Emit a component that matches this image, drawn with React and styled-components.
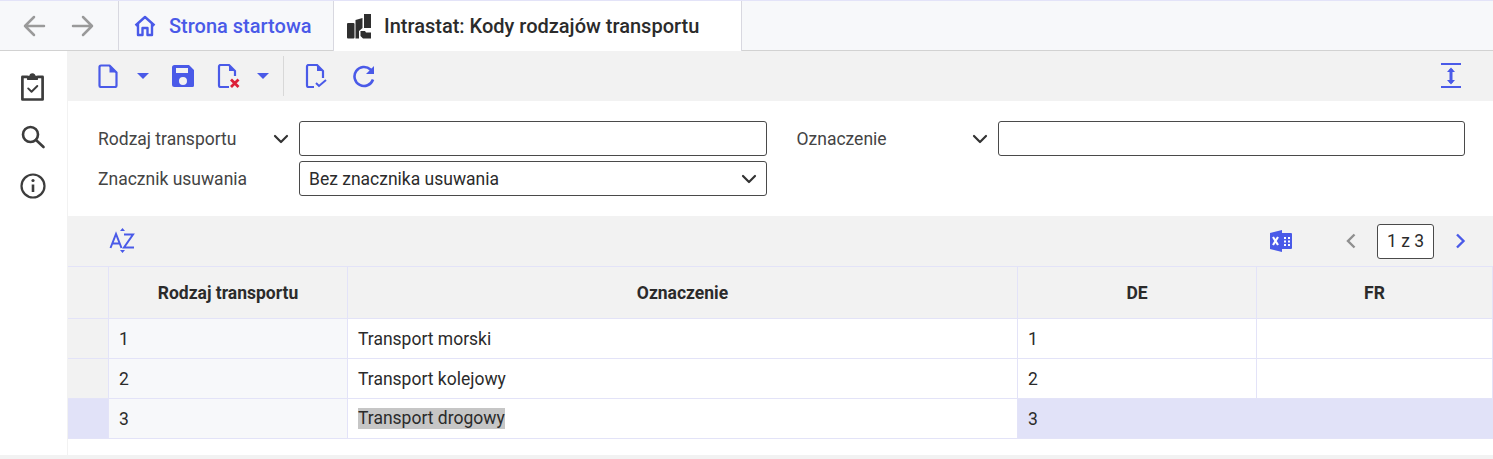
import React from "react";
import styled, { createGlobalStyle } from "styled-components";

const BLUE = "#4a5ae8";
const DARK = "#3c3c3c";
const LINE = "#e3e3f8";

const GlobalStyle = createGlobalStyle`
  html, body { margin: 0; padding: 0; background: #fff; }
  body { font-family: Roboto, "Liberation Sans", sans-serif; font-size: 17.5px; color: #2b2b2b; }
`;

const Page = styled.div`
  width: 1493px;
  height: 459px;
  overflow: hidden;
  display: flex;
  flex-direction: column;
  background: #fff;
`;

const TabBar = styled.div`
  flex: none;
  display: flex;
  background: #f7f8fa;
  border-top: 1px solid ${LINE};
  border-bottom: 1px solid #d2d2d2;
  height: 49px;
`;

const Nav = styled.div`
  width: 118px;
  flex: none;
  display: flex;
  align-items: center;
  padding-left: 22px;
  gap: 25px;
  box-sizing: border-box;
`;

const Tab = styled.div`
  display: flex;
  align-items: center;
  box-sizing: border-box;
  width: ${(p) => p.$width}px;
  padding-left: ${(p) => p.$pad}px;
  gap: ${(p) => p.$gap}px;
  border-left: 1px solid #d8d8e0;
  font-size: 20px;
  font-weight: 500;
  ${(p) =>
    p.$active
      ? `background:#fff; color:#2b2b2b; height:50px; border-right:1px solid #d8d8e0;`
      : `color:${BLUE};`}
`;

const Body = styled.div`
  flex: 1;
  display: flex;
  min-height: 0;
`;

const Sidebar = styled.div`
  width: 68px;
  flex: none;
  display: flex;
  flex-direction: column;
  align-items: center;
  padding: 21px 2px 0 0;
  gap: 23px;
  box-sizing: border-box;
  border-right: 1px solid #f2f2f2;
`;

const Main = styled.div`
  flex: 1;
  min-width: 0;
  display: flex;
  flex-direction: column;
`;

const Toolbar = styled.div`
  height: 50px;
  flex: none;
  display: flex;
  align-items: center;
  background: #f2f2f2;
  padding-left: 28px;
  padding-right: 31px;
`;

const ToolSlot = styled.span`
  display: inline-flex;
  margin-left: ${(p) => p.$ml || 0}px;
`;

const Separator = styled.span`
  width: 1px;
  height: 40px;
  background: #d8d8d8;
  margin-left: ${(p) => p.$ml}px;
`;

const Spacer = styled.span`
  flex: 1;
`;

const Filters = styled.div`
  height: 115px;
  flex: none;
  box-sizing: border-box;
  padding: 20px 28px 0 30px;
  display: grid;
  grid-template-columns: 1fr 1fr;
  column-gap: 30px;
  row-gap: 5px;
  grid-auto-rows: 35px;
`;

const Field = styled.div`
  display: grid;
  grid-template-columns: 201px 1fr;
  align-items: center;
`;

const Label = styled.div`
  display: flex;
  align-items: center;
  justify-content: space-between;
  padding-right: 10px;
  color: #444;
`;

const Input = styled.div`
  height: 35px;
  box-sizing: border-box;
  border: 1px solid #4a4a4a;
  border-radius: 3px;
  background: #fff;
  display: flex;
  align-items: center;
  justify-content: space-between;
  padding: 0 9px;
`;

const GridBar = styled.div`
  height: 50px;
  flex: none;
  display: flex;
  align-items: center;
  background: #f2f2f2;
  padding-left: 41px;
  padding-right: 27px;
`;

const Pager = styled.div`
  width: 57px;
  height: 35px;
  box-sizing: border-box;
  border: 1px solid #4a4a4a;
  border-radius: 3px;
  background: #fff;
  display: flex;
  align-items: center;
  justify-content: center;
  margin-left: 20px;
  margin-right: 20px;
`;

const Table = styled.div`
  display: grid;
  grid-template-columns: 41px 239px 670px 239px 1fr;
  grid-template-rows: 52px 40px 40px 40px;
  border-top: 1px solid ${LINE};
`;

const Cell = styled.div`
  display: flex;
  align-items: center;
  box-sizing: border-box;
  padding: 0 10px;
  border-bottom: 1px solid ${LINE};
  border-right: 1px solid ${LINE};
  background: #fff;
  &:last-child { border-right: none; }
`;

const HeadCell = styled(Cell)`
  justify-content: center;
  font-weight: 700;
  background: #f2f2f2;
  padding: 0;
`;

const Handle = styled(Cell)`
  background: ${(p) => (p.$selected ? "#e1e2f8" : "#f2f2f2")};
`;

const KeyCell = styled(Cell)`
  background: #f7f8fa;
`;

const ValueCell = styled(Cell)`
  ${(p) => p.$selected && `background:#e1e2f8; border-right-color:#e1e2f8;`}
`;

const Selected = styled.span`
  background: #c6c6c6;
  line-height: 21px;
`;

const Footer = styled.div`
  height: 4px;
  flex: none;
  background: #f2f2f2;
`;

const ArrowLeft = ({ color }) => (
  <svg width="24" height="24" viewBox="0 0 24 24" fill="none" stroke={color} strokeWidth="2.500" strokeLinecap="round" strokeLinejoin="round">
    <path d="M22 12H3M12 3l-9 9 9 9" />
  </svg>
);

const ArrowRight = ({ color }) => (
  <svg width="24" height="24" viewBox="0 0 24 24" fill="none" stroke={color} strokeWidth="2.500" strokeLinecap="round" strokeLinejoin="round">
    <path d="M2 12h19M12 3l9 9-9 9" />
  </svg>
);

const HomeIcon = () => (
  <svg width="24" height="24" viewBox="0 0 24 24" fill="none" stroke={BLUE} strokeWidth="2.400" strokeLinejoin="round">
    <path d="M2.500 11.500 12 3l9.500 8.500M5 9.500V21h4.500v-7h5v7H19V9.500" />
  </svg>
);

const TransportIcon = () => (
  <svg width="26" height="26" viewBox="0 0 26 26" fill="#2f2f2f">
    <rect x="1" y="10" width="7.500" height="15.500" rx="1" />
    <path d="M9.500 7 16.500 5v10L13 18v7.500H9.500z" />
    <path d="M18 1h7v14h-7z" />
    <path d="M14.500 18H19l1 1.500h5v6h-8l-2.500-2.500z" />
  </svg>
);

const Page24 = ({ children }) => (
  <svg width="24" height="24" viewBox="0 0 24 24" fill="none">
    {children}
  </svg>
);

const DocIcon = () => (
  <Page24>
    <path d="M3.500 3A1.500 1.500 0 0 1 5 1.500h8.500l7 7V21.500A1.500 1.500 0 0 1 19 23H5a1.500 1.500 0 0 1-1.500-1.500z" stroke={BLUE} strokeWidth="2.200" strokeLinejoin="round" />
    <path d="M13.500 1v7.500H21z" fill={BLUE} />
  </Page24>
);

const SaveIcon = () => (
  <Page24>
    <path fillRule="evenodd" clipRule="evenodd" d="M3.500 1H18l5 5v15.500a1.500 1.500 0 0 1-1.500 1.500h-18A2.500 2.500 0 0 1 1 20.500v-17A2.500 2.500 0 0 1 3.500 1zM5 4v5h12V4zm7 9a4 4 0 1 0 0 8 4 4 0 0 0 0-8z" fill={BLUE} />
  </Page24>
);

const DocDeleteIcon = () => (
  <Page24>
    <path d="M13 23H4.500A1.500 1.500 0 0 1 3 21.500v-19A1.500 1.500 0 0 1 4.500 1H13l6 6v5" stroke={BLUE} strokeWidth="2.200" strokeLinejoin="round" />
    <path d="M13 1v6h6z" fill={BLUE} />
    <path d="M15 15.500l7.500 7.500M22.500 15.500L15 23" stroke="#dc2038" strokeWidth="2.800" />
  </Page24>
);

const DocCheckIcon = () => (
  <Page24>
    <path d="M11 23H5.500A1.500 1.500 0 0 1 4 21.500v-19A1.500 1.500 0 0 1 5.500 1H14l6 6v7" stroke={BLUE} strokeWidth="2.200" strokeLinejoin="round" />
    <path d="M14 1v6h6z" fill={BLUE} />
    <path d="M13 19l3 3 7-6" stroke={BLUE} strokeWidth="2" />
  </Page24>
);

const RefreshIcon = () => (
  <Page24>
    <path d="M21 15.500A9.500 9.500 0 1 1 18.500 5.500L21 8" stroke={BLUE} strokeWidth="2.600" />
    <path d="M22 2v8h-8z" fill={BLUE} />
  </Page24>
);

const Caret = () => (
  <svg width="14" height="8" viewBox="0 0 14 8">
    <path d="M1 1h12L7 7z" fill={BLUE} />
  </svg>
);

const ExpandIcon = () => (
  <svg width="22" height="28" viewBox="0 0 22 28" fill="none">
    <path d="M1 2h20M1 25h20" stroke={BLUE} strokeWidth="2.200" />
    <path d="M11 7v14" stroke={BLUE} strokeWidth="3" />
    <path d="M11 5.500l4 4.500H7zM11 22.500L7 18h8z" fill={BLUE} />
  </svg>
);

const Chevron = () => (
  <svg width="16" height="10" viewBox="0 0 16 10" fill="none">
    <path d="M2 2l6 6 6-6" stroke="#333" strokeWidth="2.200" strokeLinecap="round" strokeLinejoin="round" />
  </svg>
);

const ClipboardIcon = () => (
  <svg width="25" height="29" viewBox="0 0 26 30" fill="none" stroke={DARK} strokeLinejoin="round">
    <path d="M8 5H2.500v23.500h21V5H18" strokeWidth="2.800" />
    <path d="M8 7.500V4.500h2.500a2.500 2.500 0 0 1 5 0H18v3z" fill={DARK} strokeWidth="1.500" />
    <path d="M8.500 17l3.500 3.500 6-6" strokeWidth="2" strokeLinecap="round" />
  </svg>
);

const SearchIcon = () => (
  <svg width="26" height="26" viewBox="0 0 26 26" fill="none" stroke={DARK} strokeWidth="2.600" strokeLinecap="round">
    <circle cx="10.500" cy="10.500" r="7.500" />
    <path d="M16 16l7.500 7" />
  </svg>
);

const InfoIcon = () => (
  <svg width="26" height="26" viewBox="0 0 26 26" fill="none" stroke={DARK}>
    <circle cx="13" cy="13" r="11.500" strokeWidth="2.200" />
    <path d="M13 11.500V19" strokeWidth="2.600" />
    <circle cx="13" cy="7.500" r="1.600" fill={DARK} stroke="none" />
  </svg>
);

const SortIcon = () => (
  <svg width="26" height="26" viewBox="0 0 26 26" fill="none">
    <path d="M1.500 20 7 6l5.500 14M3.500 15.500h7" stroke={BLUE} strokeWidth="2" />
    <path d="M15 6.500h9L15 19.500h10" stroke={BLUE} strokeWidth="2" />
    <path d="M13.500 0l2.500 3h-5zM13.500 25l-2.500-3h5z" fill={BLUE} />
  </svg>
);

const ExcelIcon = () => (
  <svg width="24" height="24" viewBox="0 0 24 24">
    <path d="M1 4l12-3v22L1 20z" fill={BLUE} />
    <path d="M13 4h9a1 1 0 0 1 1 1v14a1 1 0 0 1-1 1h-9z" fill={BLUE} />
    <path d="M4 8l5 8M9 8l-5 8" stroke="#fff" strokeWidth="2.200" />
    <path d="M15 8h2v2h-2zM19 8h2v2h-2zM15 11.500h2v2h-2zM19 11.500h2v2h-2zM15 15h2v2h-2zM19 15h2v2h-2z" fill="#fff" />
  </svg>
);

const PagerArrow = ({ color, flip }) => (
  <svg width="12" height="16" viewBox="0 0 12 16" fill="none">
    <path d={flip ? "M3 1.500l6.500 6.500L3 14.500" : "M9.500 1.500L3 8l6.500 6.500"} stroke={color} strokeWidth="2.400" />
  </svg>
);

const rows = [
  { id: "1", name: "Transport morski", de: "1" },
  { id: "2", name: "Transport kolejowy", de: "2" },
  { id: "3", name: "Transport drogowy", de: "3", selected: true },
];

export default function App() {
  return (
    <Page>
      <GlobalStyle />
      <TabBar>
        <Nav>
          <ArrowLeft color="#9a9a9a" />
          <ArrowRight color="#9a9a9a" />
        </Nav>
        <Tab $width={215} $pad={14} $gap={12}>
          <HomeIcon />
          Strona startowa
        </Tab>
        <Tab $active $width={409} $pad={12} $gap={12}>
          <TransportIcon />
          Intrastat: Kody rodzajów transportu
        </Tab>
      </TabBar>
      <Body>
        <Sidebar>
          <ClipboardIcon />
          <SearchIcon />
          <InfoIcon />
        </Sidebar>
        <Main>
          <Toolbar>
            <ToolSlot><DocIcon /></ToolSlot>
            <ToolSlot $ml={16}><Caret /></ToolSlot>
            <ToolSlot $ml={21}><SaveIcon /></ToolSlot>
            <ToolSlot $ml={21}><DocDeleteIcon /></ToolSlot>
            <ToolSlot $ml={16}><Caret /></ToolSlot>
            <Separator $ml={13} />
            <ToolSlot $ml={19}><DocCheckIcon /></ToolSlot>
            <ToolSlot $ml={25}><RefreshIcon /></ToolSlot>
            <Spacer />
            <ToolSlot><ExpandIcon /></ToolSlot>
          </Toolbar>
          <Filters>
            <Field>
              <Label>Rodzaj transportu <Chevron /></Label>
              <Input />
            </Field>
            <Field>
              <Label>Oznaczenie <Chevron /></Label>
              <Input />
            </Field>
            <Field>
              <Label>Znacznik usuwania</Label>
              <Input>Bez znacznika usuwania <Chevron /></Input>
            </Field>
          </Filters>
          <GridBar>
            <SortIcon />
            <Spacer />
            <ExcelIcon />
            <ToolSlot $ml={52}><PagerArrow color="#8f8f8f" /></ToolSlot>
            <Pager>1 z 3</Pager>
            <PagerArrow color={BLUE} flip />
          </GridBar>
          <Table>
            <HeadCell />
            <HeadCell>Rodzaj transportu</HeadCell>
            <HeadCell>Oznaczenie</HeadCell>
            <HeadCell>DE</HeadCell>
            <HeadCell>FR</HeadCell>
            {rows.map((row) => (
              <React.Fragment key={row.id}>
                <Handle $selected={row.selected} />
                <KeyCell>{row.id}</KeyCell>
                <Cell>{row.selected ? <Selected>{row.name}</Selected> : row.name}</Cell>
                <ValueCell $selected={row.selected}>{row.de}</ValueCell>
                <ValueCell $selected={row.selected} />
              </React.Fragment>
            ))}
          </Table>
        </Main>
      </Body>
      <Footer />
    </Page>
  );
}
